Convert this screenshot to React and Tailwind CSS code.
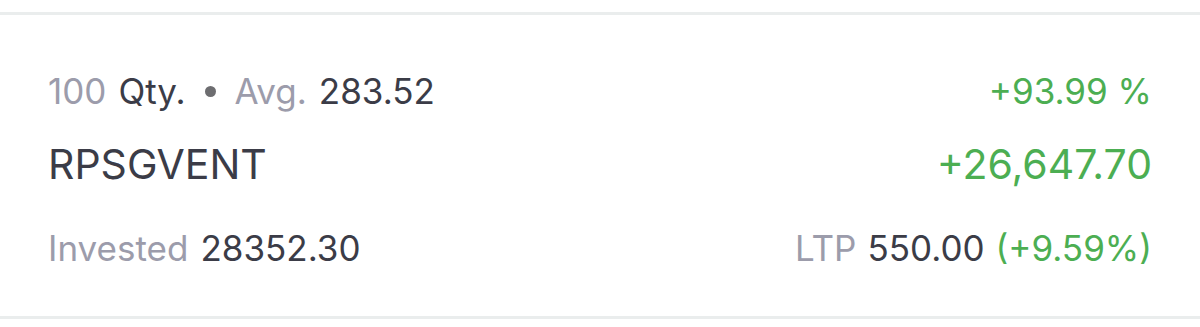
export default function App() {
  return (
    <div className="w-[1200px] h-[327px] bg-white" style={{ fontFamily: "Inter, 'Noto Sans', sans-serif" }}>
      <div className="h-[12px]" />
      <div className="h-[3px] bg-[#eaeded]" />
      <div className="h-[301px] pl-[48px] pr-[48px] pt-[56px]">
        <div className="flex justify-between items-center text-[35px] leading-[40px]">
          <div className="flex items-center">
            <span className="text-[#9c9cab]">100</span>
            <span className="ml-[12px] text-[#3b3c47]">Qty.</span>
            <span className="mx-[19px] w-[11px] h-[11px] rounded-full bg-[#6d6d70]" />
            <span className="text-[#9c9cab]">Avg.</span>
            <span className="ml-[12px] text-[#3b3c47]">283.52</span>
          </div>
          <span className="text-[#4cae52]">+93.99 %</span>
        </div>
        <div className="mt-[29px] flex justify-between items-center text-[41px] leading-[48px]">
          <span className="text-[#3b3c47]">RPSGVENT</span>
          <span className="text-[#4cae52]">+26,647.70</span>
        </div>
        <div className="mt-[40px] flex justify-between items-center text-[35px] leading-[40px]">
          <div className="flex items-center">
            <span className="text-[#9c9cab]">Invested</span>
            <span className="ml-[12px] text-[#3b3c47]">28352.30</span>
          </div>
          <div className="flex items-center">
            <span className="text-[#9c9cab]">LTP</span>
            <span className="ml-[11px] text-[#3b3c47]">550.00</span>
            <span className="ml-[11px] text-[#4cae52]">(+9.59%)</span>
          </div>
        </div>
      </div>
      <div className="h-[3px] bg-[#eaeded]" />
    </div>
  );
}
